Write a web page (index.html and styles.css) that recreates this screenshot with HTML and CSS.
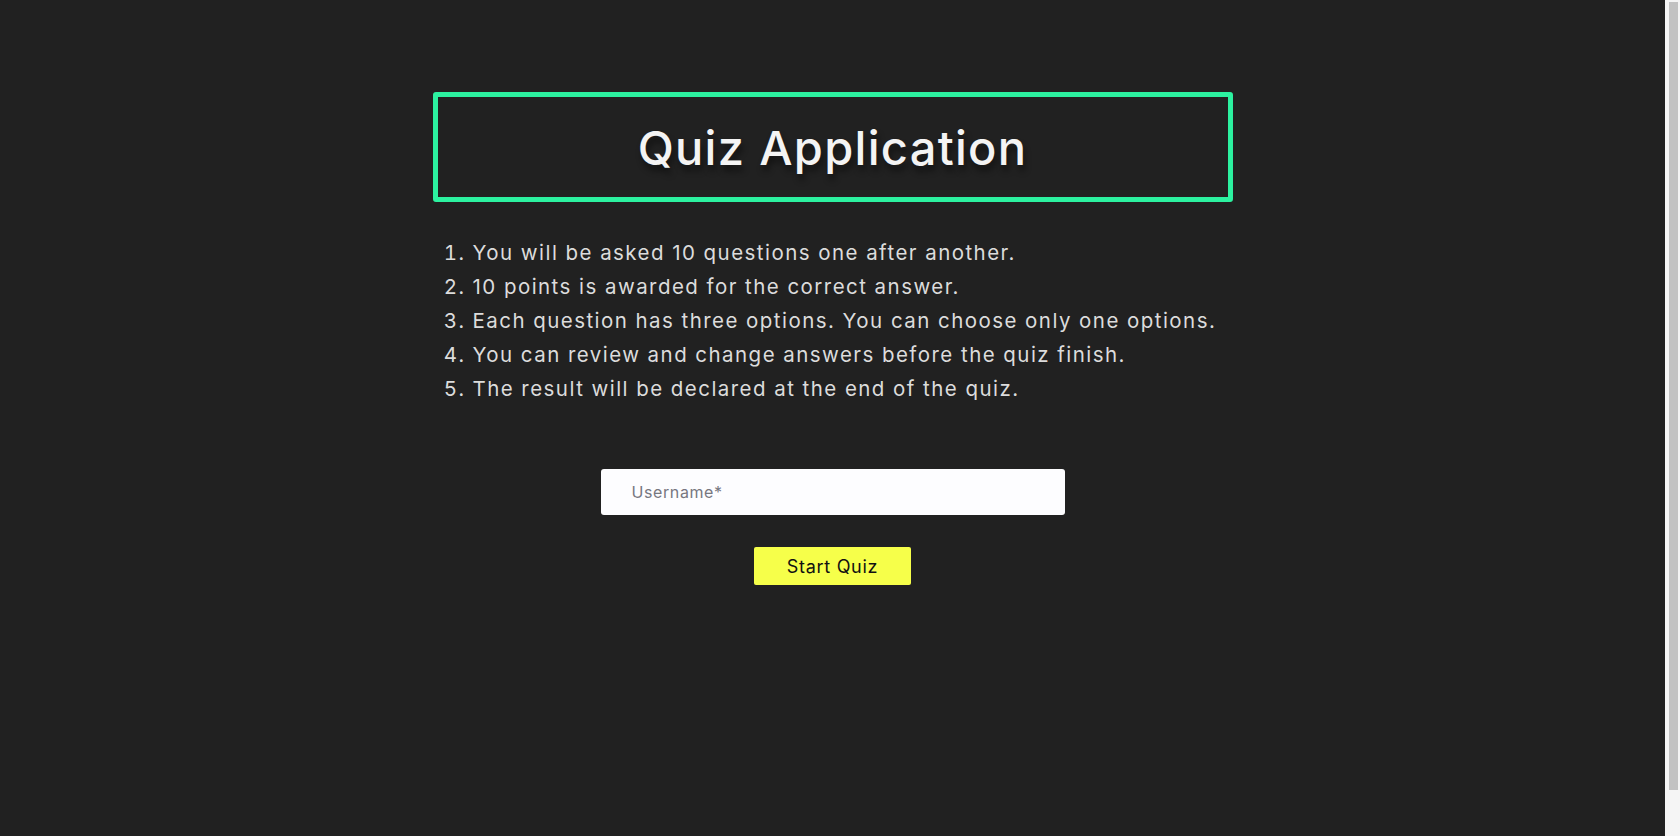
FILE: index.html
```html
<!DOCTYPE html>
<html lang="en">
<head>
<meta charset="utf-8">
<title>Quiz Application</title>
<link rel="stylesheet" href="styles.css">
</head>
<body>
<main class="page">
  <section class="quiz">
    <h1 class="title">Quiz Application</h1>
    <ol class="rules">
      <li>You will be asked 10 questions one after another.</li>
      <li>10 points is awarded for the correct answer.</li>
      <li>Each question has three options. You can choose only one options.</li>
      <li>You can review and change answers before the quiz finish.</li>
      <li>The result will be declared at the end of the quiz.</li>
    </ol>
    <form class="start">
      <input class="username" type="text" placeholder="Username*">
      <button class="btn" type="button">Start Quiz</button>
    </form>
  </section>
</main>
<div class="scrollbar" aria-hidden="true"><div class="thumb"></div></div>
</body>
</html>
```

FILE: styles.css
```css
html, body {
  margin: 0;
  padding: 0;
  height: 100%;
  overflow: hidden;
  background: #212121;
}
body {
  display: flex;
  font-family: Inter, "Noto Sans", sans-serif;
  color: #e2e2e2;
}
.page {
  flex: 1;
  padding-top: 92px;
  box-sizing: border-box;
}
.scrollbar {
  width: 15px;
  box-sizing: border-box;
  padding: 2px 2px 46px 4px;
  background: #f5f5f5;
  display: flex;
}
.thumb {
  flex: 1;
  background: #c2c2c2;
}
.quiz {
  width: 800px;
  margin: 0 auto;
}
.title {
  box-sizing: border-box;
  height: 110px;
  margin: 0;
  border: 5px solid #2cf2a0;
  border-radius: 3px;
  display: flex;
  align-items: center;
  justify-content: center;
  font-size: 47px;
  font-weight: 500;
  letter-spacing: 1.3px;
  color: #f4f4f4;
  text-shadow: 2px 6px 6px rgba(0, 0, 0, 0.45);
}
.rules {
  margin: 34px 0 0;
  padding-left: 40px;
  font-size: 20.5px;
  line-height: 34px;
  letter-spacing: 1.45px;
  color: #dcdcdc;
}
.start {
  display: flex;
  flex-direction: column;
  align-items: center;
  margin-top: 63px;
}
.username {
  box-sizing: border-box;
  width: 464px;
  height: 46px;
  border: none;
  border-radius: 3px;
  background: #fdfdff;
  padding: 0 31px;
  font-family: inherit;
  font-size: 16px;
  letter-spacing: 0.6px;
  color: #333;
  outline: none;
}
.username::placeholder {
  color: #77777f;
}
.btn {
  box-sizing: border-box;
  margin-top: 32px;
  width: 157px;
  height: 38px;
  border: none;
  border-radius: 2px;
  background: #f6ff4a;
  font-family: inherit;
  font-size: 18px;
  letter-spacing: 0.7px;
  color: #111;
  cursor: pointer;
}
```
